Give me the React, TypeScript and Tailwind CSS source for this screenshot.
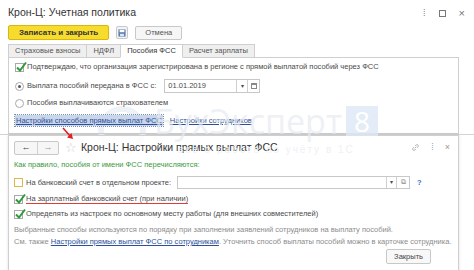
import React from "react";

const Check = ({ on, warn }: { on?: boolean; warn?: boolean }) => (
  <span
    className={`relative inline-block w-[9px] h-[9px] shrink-0 border bg-white ${
      warn ? "border-[#e0b84a]" : "border-[#a9a9a9]"
    }`}
  >
    {on && (
      <svg viewBox="0 0 12 12" className="absolute -left-[1px] -top-[3px] w-[12px] h-[12px]">
        <path d="M2 6.5 L5 9.5 L11 1.5" fill="none" stroke="#2f9a3a" strokeWidth="2" />
      </svg>
    )}
  </span>
);

const Radio = ({ on }: { on?: boolean }) => (
  <span className="inline-flex items-center justify-center w-[9px] h-[9px] shrink-0 rounded-full border border-[#a9a9a9] bg-white">
    {on && <span className="w-[3px] h-[3px] rounded-full bg-[#555]" />}
  </span>
);

const tabs = ["Страховые взносы", "НДФЛ", "Пособия ФСС", "Расчет зарплаты"];

export default function App() {
  return (
    <div
      className="relative w-[474px] h-[270px] overflow-hidden bg-white text-[#4a4a4a] text-[7.5px]"
      style={{ fontFamily: '"Liberation Sans", Arial, sans-serif' }}
    >
      {/* Watermark ring */}
      <div className="absolute left-[98px] top-[106px] w-[48px] h-[48px] rounded-full border-[6px] border-[#eef2f6] pointer-events-none" />

      {/* Main window */}
      <div className="relative px-2">
        <div className="flex items-center justify-between h-[24px] pt-[2px]">
          <span className="text-[10.5px] text-[#333]">Крон-Ц: Учетная политика</span>
          <div className="flex items-center gap-[13px] pr-[1px] text-[#777]">
            <span className="text-[9px] leading-none">⁞</span>
            <span className="w-[7px] h-[7px] border border-[#777]" />
            <span className="text-[11px] leading-none">×</span>
          </div>
        </div>

        {/* Toolbar */}
        <div className="flex items-center gap-[7px] mt-[1px] h-[15px]">
          <button className="h-[15px] px-[10px] rounded-[2px] border border-[#d8b80c] bg-[#f7dc2e] text-[#333] text-[8px] font-bold">
            Записать и закрыть
          </button>
          <span className="flex items-center justify-center w-[12px] h-[13px] border border-[#c8c8c8] rounded-[2px] bg-[#f4f4f4]">
            <svg viewBox="0 0 10 10" className="w-[8px] h-[8px]">
              <rect x="0.5" y="0.5" width="9" height="9" fill="#5a7fb0" />
              <rect x="2" y="1" width="6" height="3" fill="#fff" />
              <rect x="2.5" y="6" width="5" height="3" fill="#dbe4ef" />
            </svg>
          </span>
          <button className="h-[14px] px-[9px] rounded-[2px] border border-[#c8c8c8] bg-[#f6f6f6] text-[#555] text-[7.5px]">
            Отмена
          </button>
        </div>

        {/* Tabs */}
        <div className="flex mt-[4px] h-[14px]">
          {tabs.map((t, i) => (
            <div
              key={t}
              className={`flex items-center px-[6px] border border-[#cfcfcf] text-[7.5px] ${
                i > 0 ? "-ml-px" : ""
              } ${i === 2 ? "bg-white border-b-white text-[#333] z-10" : "bg-[#efefef] text-[#555]"}`}
            >
              {t}
            </div>
          ))}
        </div>

        {/* Panel */}
        <div className="-mt-px border border-[#cfcfcf] w-[451px] h-[77px] px-[6px] pt-[4px] flex flex-col">
          <div className="flex items-center gap-[3px] h-[10px]">
            <Check on />
            <span>Подтверждаю, что организация зарегистрирована в регионе с прямой выплатой пособий через ФСС</span>
          </div>
          <div className="flex items-center gap-[3px] h-[14px] mt-[7px]">
            <Radio on />
            <span>Выплата пособий передана в ФСС с:</span>
            <div className="flex items-center ml-[5px] h-[14px] border border-[#c8c8c8]">
              <span className="w-[71px] px-[3px]">01.01.2019</span>
              <span className="flex items-center justify-center w-[11px] h-full border-l border-[#d0d0d0] text-[6px]">▾</span>
              <span className="flex items-center justify-center w-[12px] h-full border-l border-[#d0d0d0]">
                <span className="w-[6px] h-[6px] border border-[#888] border-t-2" />
              </span>
            </div>
          </div>
          <div className="flex items-center gap-[3px] h-[10px] mt-[5px]">
            <Radio />
            <span>Пособия выплачиваются страхователем</span>
          </div>
          <div className="flex items-center gap-[7px] h-[11px] mt-[7px]">
            <span className="px-px bg-[#c9d6ea] outline outline-1 outline-dotted outline-[#7d8fb0] text-[#2c4f9a] underline">
              Настройки способов прямых выплат ФСС
            </span>
            <span className="text-[#2c4f9a] underline">Настройки сотрудников</span>
          </div>
        </div>
      </div>

      <div className="h-px bg-[#d4d4d4] w-full" />

      {/* Settings window */}
      <div className="relative ml-[8px] w-[451px] h-[140px] border-l border-r border-t border-[#cfcfcf] bg-white/80 px-[5px] shadow-[0_0_3px_rgba(0,0,0,0.12)]">
        <div className="flex items-center h-[22px] pt-[1px]">
          <div className="flex h-[14px] border border-[#c8c8c8] rounded-[2px] bg-[#f6f6f6]">
            <span className="flex items-center justify-center w-[22px] text-[9px] text-[#444]">←</span>
            <span className="flex items-center justify-center w-[21px] border-l border-[#d0d0d0] text-[9px] text-[#999]">→</span>
          </div>
          <span className="ml-[6px] text-[13px] leading-none text-[#cfcfcf]">☆</span>
          <span className="ml-[4px] text-[10.5px] text-[#333]">Крон-Ц: Настройки прямых выплат ФСС</span>
          <div className="ml-auto flex items-center gap-[11px] pr-[3px] text-[#999]">
            <svg viewBox="0 0 12 12" className="w-[9px] h-[9px]">
              <path d="M5 7 L7 5 M4 5.5 L2.5 7 A1.8 1.8 0 0 0 5 9.5 L6.5 8 M8 6.5 L9.5 5 A1.8 1.8 0 0 0 7 2.5 L5.5 4" fill="none" stroke="#999" strokeWidth="1" />
            </svg>
            <span className="text-[9px] leading-none">⁞</span>
            <span className="text-[9px] leading-none">×</span>
          </div>
        </div>

        <div className="mt-[1px] text-[#3c9a3c] h-[11px] flex items-center">Как правило, пособия от имени ФСС перечисляются:</div>

        <div className="flex items-center gap-[3px] h-[13px] mt-[6px]">
          <Check warn />
          <span>На банковский счет в отдельном проекте:</span>
          <div className="flex items-center ml-[3px] h-[13px] border border-[#c8c8c8]">
            <span className="w-[208px]" />
            <span className="flex items-center justify-center w-[10px] h-full border-l border-[#d0d0d0] text-[6px]">▾</span>
            <span className="flex items-center justify-center w-[13px] h-full border-l border-[#d0d0d0] text-[7px] text-[#888]">⧉</span>
          </div>
          <span className="ml-[4px] text-[#3a6fc4] font-bold">?</span>
        </div>

        <div className="flex items-center gap-[3px] h-[10px] mt-[5px]">
          <Check on />
          <span className="border-b border-[#e23b3b] leading-[9px]">На зарплатный банковский счет (при наличии)</span>
        </div>

        <div className="flex items-center gap-[3px] h-[10px] mt-[5px]">
          <Check on />
          <span>Определять из настроек по основному месту работы (для внешних совместителей)</span>
        </div>

        <div className="mt-[5px] text-[#8c8c8c] leading-[12px] whitespace-nowrap">
          <div>Выбранные способы используются по порядку при заполнении заявлений сотрудников на выплату пособий.</div>
          <div>
            См. также <span className="text-[#2c4f9a] underline">Настройки прямых выплат ФСС по сотрудникам</span>. Уточнить способ выплаты пособий можно в карточке сотрудника.
          </div>
        </div>

        <div className="flex justify-end mt-[1px] pr-[22px]">
          <button className="h-[15px] px-[7px] rounded-[2px] border border-[#c8c8c8] bg-[#f8f8f8] text-[#444] text-[7.5px]">
            Закрыть
          </button>
        </div>
      </div>

      {/* Watermark text */}
      <div className="absolute left-[154px] top-[104px] flex items-center gap-[4px] pointer-events-none">
        <span className="text-[34px] leading-none text-[#e6eaef]/70" style={{ fontFamily: '"Open Sans", sans-serif' }}>
          БухЭксперт
        </span>
        <span className="w-[32px] h-[30px] bg-[#dde9f5]/80 text-white text-[28px] leading-[30px] text-center" style={{ fontFamily: '"Open Sans", sans-serif' }}>
          8
        </span>
      </div>
      <div className="absolute left-[178px] top-[142px] text-[10px] tracking-[2px] text-[#eef1f4] pointer-events-none">
        всё о работе по учёту в 1С
      </div>

      {/* Red arrow */}
      <svg className="absolute left-[60px] top-[126px] w-[16px] h-[16px] pointer-events-none" viewBox="0 0 16 16">
        <path d="M3 2 L11 11" stroke="#e02020" strokeWidth="1.6" />
        <path d="M13 13 L7 11.5 L11.5 7 Z" fill="#e02020" />
      </svg>
    </div>
  );
}
